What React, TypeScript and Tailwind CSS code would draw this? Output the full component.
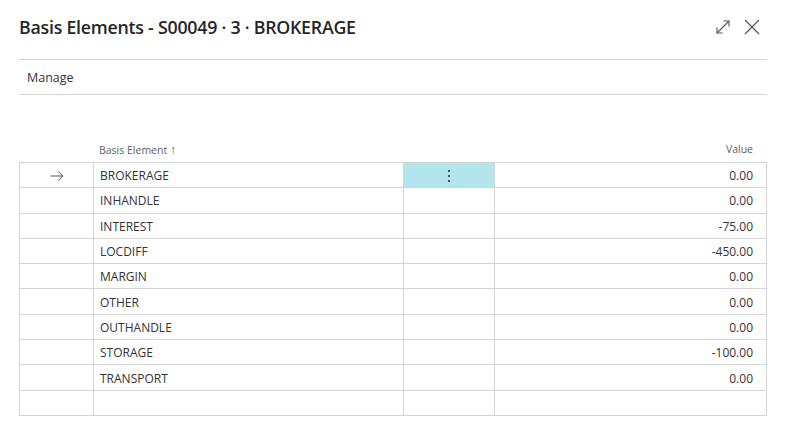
const rows = [
  { name: 'BROKERAGE', value: '0.00', current: true },
  { name: 'INHANDLE', value: '0.00' },
  { name: 'INTEREST', value: '-75.00' },
  { name: 'LOCDIFF', value: '-450.00' },
  { name: 'MARGIN', value: '0.00' },
  { name: 'OTHER', value: '0.00' },
  { name: 'OUTHANDLE', value: '0.00' },
  { name: 'STORAGE', value: '-100.00' },
  { name: 'TRANSPORT', value: '0.00' },
  { name: '', value: '' },
]

function ExpandIcon() {
  return (
    <svg width="16" height="16" viewBox="0 0 16 16" fill="none" stroke="#555" strokeWidth="1.1">
      <path d="M2 14 L14 2" />
      <path d="M8.5 2 H14 V7.5" />
      <path d="M2 8.5 V14 H7.5" />
    </svg>
  )
}

function CloseIcon() {
  return (
    <svg width="16" height="16" viewBox="0 0 16 16" fill="none" stroke="#555" strokeWidth="1.2">
      <path d="M1 1 L15 15 M15 1 L1 15" />
    </svg>
  )
}

function RowArrow() {
  return (
    <svg width="14" height="10" viewBox="0 0 14 10" fill="none" stroke="#555" strokeWidth="1">
      <path d="M0.5 5 H13 M8.5 0.8 L13 5 L8.5 9.2" />
    </svg>
  )
}

export default function App() {
  return (
    <div
      className="w-[785px] h-[432px] bg-white text-[#212121] overflow-hidden"
      style={{ fontFamily: '"Open Sans", "Noto Sans", sans-serif' }}
    >
      <div className="flex items-center justify-between h-[54px] pl-[19px] pr-[25px]">
        <h1 className="text-[17.8px] font-semibold tracking-[-0.25px] text-[#262626]">
          Basis Elements - S00049 · 3 · BROKERAGE
        </h1>
        <div className="flex items-center gap-[13px]">
          <ExpandIcon />
          <CloseIcon />
        </div>
      </div>
      <div className="ml-[19px] mr-[18px] mt-[5px] border-t border-b border-[#d4d4d4] h-[36px] flex items-center pl-[8px] pt-[3px] text-[12.5px] text-[#333]">
        Manage
      </div>
      <div className="ml-[19px] mr-[18px] mt-[43px]">
        <div className="flex h-[24px] items-center text-[10.5px] text-[#616161]">
          <div className="w-[74px]" />
          <div className="w-[310px] pl-[6px]">
            Basis Element <span className="text-[12px]">↑</span>
          </div>
          <div className="w-[91px]" />
          <div className="flex-1 text-right pr-[14px]">Value</div>
        </div>
        <div className="border-t border-l border-[#d4d4d4]">
          {rows.map((r, i) => (
            <div key={i} className="flex h-[25.3px] border-b border-[#d4d4d4] text-[12px] text-[#333]">
              <div className="w-[74px] border-r border-[#d4d4d4] flex items-center justify-center pt-[1px]">
                {r.current ? <RowArrow /> : null}
              </div>
              <div className="w-[310px] border-r border-[#d4d4d4] flex items-center pl-[6px] pt-[2px]">{r.name}</div>
              <div
                className={
                  'w-[91px] border-r border-[#d4d4d4] flex items-center justify-center ' +
                  (r.current ? 'bg-[#b2e6ec]' : '')
                }
              >
                {r.current ? (
                  <div className="flex flex-col gap-[3px] pt-[1px]">
                    <span className="block w-[2px] h-[2px] bg-[#555]" />
                    <span className="block w-[2px] h-[2px] bg-[#555]" />
                    <span className="block w-[2px] h-[2px] bg-[#555]" />
                  </div>
                ) : null}
              </div>
              <div className="flex-1 border-r border-[#d4d4d4] flex items-center justify-end pr-[13px] pt-[2px]">
                {r.value}
              </div>
            </div>
          ))}
        </div>
      </div>
    </div>
  )
}
